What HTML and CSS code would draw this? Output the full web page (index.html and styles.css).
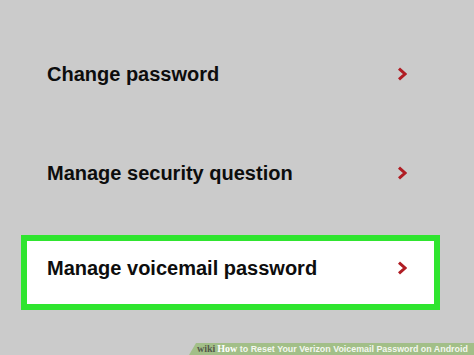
FILE: index.html
```html
<!DOCTYPE html>
<html>
<head>
<meta charset="utf-8">
<link rel="stylesheet" href="styles.css">
</head>
<body>
<div class="screen">
  <div class="list">
    <div class="item">
      <span class="label">Change password</span>
      <svg class="chev" width="10" height="14" viewBox="0 0 10 14"><polyline points="2,1.6 8,7 2,12.4" fill="none" stroke="#b01d24" stroke-width="3" stroke-linejoin="miter"/></svg>
    </div>
    <div class="item second">
      <span class="label">Manage security question</span>
      <svg class="chev" width="10" height="14" viewBox="0 0 10 14"><polyline points="2,1.6 8,7 2,12.4" fill="none" stroke="#b01d24" stroke-width="3" stroke-linejoin="miter"/></svg>
    </div>
    <div class="item highlight">
      <span class="label">Manage voicemail password</span>
      <svg class="chev" width="10" height="14" viewBox="0 0 10 14"><polyline points="2,1.6 8,7 2,12.4" fill="none" stroke="#b01d24" stroke-width="3" stroke-linejoin="miter"/></svg>
    </div>
  </div>
  <div class="banner">
    <span class="wiki">wiki</span><span class="how">How</span><span class="title"> to Reset Your Verizon Voicemail Password on Android</span>
  </div>
</div>
</body>
</html>
```

FILE: styles.css
```css
html, body {
  margin: 0;
  padding: 0;
}
body {
  width: 474px;
  height: 355px;
  overflow: hidden;
  background: #cbcbcb;
  font-family: "Liberation Sans", Arial, sans-serif;
}
.screen {
  position: relative;
  width: 474px;
  height: 355px;
  background: #cbcbcb;
}
.list {
  display: flex;
  flex-direction: column;
  padding-top: 62px;
}
.item {
  display: flex;
  align-items: center;
  justify-content: space-between;
  padding: 0 67px 0 47px;
  height: 24px;
}
.second {
  margin-top: 75px;
}
.label {
  font-size: 20px;
  line-height: 24px;
  font-weight: bold;
  color: #0d0d0d;
}
.chev {
  display: block;
}
.highlight {
  margin: 50px 34px 0 21px;
  height: auto;
  border: 6px solid #2fe52f;
  background: #ffffff;
  padding: 15px 27px 24px 20px;
}
.banner {
  position: absolute;
  left: 189px;
  right: 0;
  bottom: 0;
  height: 12px;
  background: #a2bf88;
  clip-path: polygon(7px 0, 100% 0, 100% 100%, 0 100%);
  display: flex;
  align-items: center;
  padding-left: 8px;
  line-height: 12px;
  font-weight: bold;
  white-space: nowrap;
}
.wiki {
  font-family: "Liberation Serif", "Times New Roman", serif;
  color: #55584a;
  font-size: 10px;
  margin-right: 2px;
}
.how {
  font-family: "Liberation Serif", "Times New Roman", serif;
  color: #ffffff;
  font-size: 10px;
}
.title {
  color: #f4f7ef;
  font-size: 8.9px;
  white-space: pre;
}
```
